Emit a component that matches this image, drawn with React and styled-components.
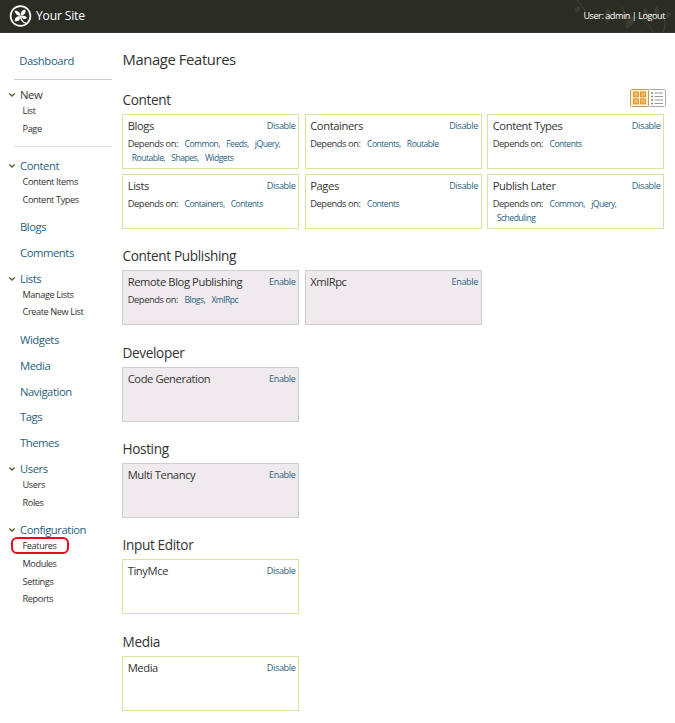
import React from "react";
import styled, { createGlobalStyle } from "styled-components";

const GlobalStyle = createGlobalStyle`
  *, *::after { box-sizing: border-box; }
  body {
    margin: 0;
    background: #fff;
    color: #333;
    font-family: "Open Sans", "Noto Sans", sans-serif;
  }
  a { color: inherit; text-decoration: none; }
  h1, h2, h3, ul { margin: 0; padding: 0; font-weight: 400; list-style: none; }
`;

const Page = styled.div`
  height: 723px;
  overflow: hidden;
`;

const Header = styled.header`
  position: relative;
  display: flex;
  align-items: center;
  height: 33px;
  padding: 0 10px 1px 9px;
  background: #2b2d25;
  border-bottom: 1px solid #383930;
  color: #fff;
`;

const Vine = styled.svg`
  position: absolute;
  right: 0;
  top: 0;
`;

const SiteName = styled.a`
  flex: 1;
  margin-left: 4px;
  font-size: 12.1px;
  letter-spacing: -0.17px;
  line-height: 19px;
  padding-bottom: 1px;
`;

const UserBar = styled.div`
  position: relative;
  font-size: 9.1px;
  letter-spacing: -0.45px;
  line-height: 16px;
  white-space: nowrap;
`;

const Body = styled.div`
  display: flex;
  align-items: flex-start;
`;

const Sidebar = styled.nav`
  width: 122px;
  padding: 18px 10px 0 8px;
`;

const Rule = styled.div`
  height: 1px;
  margin: 0 0 ${(p) => p.$space}px 6px;
  background: ${(p) => (p.$light ? "#e0e0e0" : "#cfcfcf")};
`;

const Dashboard = styled.a`
  display: block;
  height: 20px;
  margin: 0 0 8px 11.2px;
  color: #2a5f80;
  font-size: 11.3px;
  letter-spacing: -0.4px;
  line-height: 20px;
`;

const NavGroup = styled.section`
  margin-bottom: ${(p) => p.$gap}px;
`;

const NavHead = styled.h3`
  display: flex;
  align-items: center;
  height: 20px;
  color: ${(p) => (p.$plain ? "#333" : "#2a5f80")};
  font-size: 11.3px;
  letter-spacing: -0.46px;
  line-height: 20px;
  white-space: nowrap;
`;

const ArrowSlot = styled.span`
  display: flex;
  align-items: center;
  width: 12px;
`;

const SubList = styled.ul`
  margin: -2.9px 0 0 14.5px;
`;

const SubItem = styled.li`
  height: 17.6px;
  font-size: 9.2px;
  letter-spacing: -0.4px;
  line-height: 17.6px;
  white-space: nowrap;
`;

const Highlight = styled.span`
  position: relative;
  &::after {
    content: "";
    position: absolute;
    left: -12px;
    top: -2px;
    width: 58px;
    height: 17px;
    border: 2px solid #e60b1c;
    border-radius: 6px;
  }
`;

const Main = styled.main`
  width: 543px;
  padding-top: 15px;
`;

const Title = styled.h1`
  height: 23px;
  margin-bottom: 1.7px;
  padding-left: 0.5px;
  font-size: 14.8px;
  letter-spacing: -0.38px;
  line-height: 23px;
`;

const TitleRow = styled.div`
  display: flex;
  align-items: flex-end;
  justify-content: space-between;
  height: 41.35px;
`;

const SectionTitle = styled.h2`
  height: 24px;
  padding-left: 0.5px;
  font-size: 13.6px;
  letter-spacing: -0.35px;
  line-height: 20px;
`;

const Switcher = styled.svg`
  margin: 0 -1px 7px 0;
`;

const Cards = styled.div`
  display: grid;
  grid-template-columns: repeat(3, 177px);
  gap: 5px 5.5px;
`;

const Card = styled.article`
  height: 55px;
  padding: 2px 2.5px 0 4.7px;
  border: 1px solid ${(p) => (p.$off ? "#cecece" : "#d3e69f")};
  background: ${(p) => (p.$off ? "#efeaee" : "#fff")};
`;

const CardTop = styled.div`
  display: flex;
  justify-content: space-between;
  height: 19px;
`;

const CardTitle = styled.h3`
  font-size: 11.2px;
  letter-spacing: -0.4px;
  line-height: 17.6px;
`;

const Action = styled.a`
  color: #2a5f80;
  font-size: 9.1px;
  letter-spacing: -0.36px;
  line-height: 18px;
`;

const Depends = styled.div`
  display: flex;
  flex-wrap: wrap;
  max-width: 160px;
  padding-top: 1px;
  line-height: 14px;
`;

const DependsLabel = styled.span`
  margin-right: 2.3px;
  font-size: 9.3px;
  letter-spacing: -0.4px;
`;

const Dependency = styled.a`
  margin: 0 2px 0 4.1px;
  color: #2a5f80;
  font-size: 8.6px;
  letter-spacing: -0.52px;
`;

const Logo = () => (
  <svg width="23" height="24" viewBox="0 0 23 24" fill="none">
    <circle cx="11.5" cy="12" r="9.9" stroke="#fff" strokeWidth="1.7" />
    <g fill="#fff">
      <path d="M11.4 12C8.5 11.6 5.9 9.8 5.6 6.7C9 6.2 11.4 8.5 11.4 12Z" />
      <path d="M11.8 11.7C11.2 8.5 13.1 5.7 16.4 5.8C17.2 9 15 11.6 11.8 11.7Z" />
      <path d="M11.2 12.4C11.5 15.7 9.1 17.9 5.9 17.2C5.3 14.2 7.8 12 11.2 12.4Z" />
      <path d="M11.9 12.2C14.2 11.3 17.2 11.9 17.9 14.2C15.7 15.8 13 15 11.9 12.2Z" />
    </g>
    <path d="M11.5 12C11.7 15.4 13.2 18.1 17.2 19.3" stroke="#fff" strokeWidth="1.3" />
  </svg>
);

const VineArt = () => (
  <Vine width="110" height="32" viewBox="0 0 110 32" fill="none">
    <g stroke="#414439" strokeWidth="1">
      <path d="M12 0C16 3 17 8 21 12" />
      <path d="M60 20C68 15 75 17 80 22C85 26 87 29 88 32" />
      <path d="M98 32C101 26 100 20 98 15M66 18C60 14 58 11 57 7" />
    </g>
    <g fill="#3a3d32">
      <path d="M15 6C10 6 9 10 11 13C15 12 16 9 15 6Z" />
      <path d="M43 8C48 13 46 18 42 24C39 18 39 13 43 8Z" />
      <path d="M68 18C71 21 68 26 61 29C59 23 62 19 68 18Z" />
      <path d="M80 8C85 10 84 15 82 20C78 16 77 11 80 8Z" />
      <path d="M91 6C95 9 95 14 92 17C89 13 89 9 91 6Z" />
      <path d="M105 12C108 14 105 18 101 18C100 15 102 12 105 12Z" />
    </g>
  </Vine>
);

const Arrow = () => (
  <svg width="8" height="6" viewBox="0 0 8 6" fill="none">
    <path d="M1.3 1.6L4 4L6.7 1.6" stroke="#4e6426" strokeWidth="1.4" />
  </svg>
);

const ViewSwitcher = () => (
  <Switcher width="36" height="18" viewBox="0 0 36 18">
    <rect x="18.5" y=".5" width="17" height="17" rx="1" fill="#fff" stroke="#aaa" />
    <rect x=".5" y=".5" width="18" height="17" rx="1" fill="#fff2d6" stroke="#c89a50" />
    <g fill="#fbb44c" stroke="#d08c2e" strokeWidth=".8">
      <rect x="3.4" y="2.9" width="5" height="5" />
      <rect x="10.4" y="2.9" width="5" height="5" />
      <rect x="3.4" y="9.9" width="5" height="5" />
      <rect x="10.4" y="9.9" width="5" height="5" />
    </g>
    <path d="M21 4h2M21 7.5h2M21 11h2M21 14.5h2" stroke="#888" strokeWidth="1.6" />
    <path d="M24.5 4H33M24.5 7.5H33M24.5 11H33M24.5 14.5H33" stroke="#999" strokeWidth="1" />
  </Switcher>
);

const menu = [
  { title: "Content", items: ["Content Items", "Content Types"] },
  { title: "Blogs" },
  { title: "Comments" },
  { title: "Lists", items: ["Manage Lists", "Create New List"] },
  { title: "Widgets" },
  { title: "Media" },
  { title: "Navigation" },
  { title: "Tags" },
  { title: "Themes" },
  { title: "Users", items: ["Users", "Roles"] },
  { title: "Configuration", items: ["Features", "Modules", "Settings", "Reports"] },
];

const sections = [
  {
    title: "Content",
    features: [
      { name: "Blogs", on: true, deps: ["Common", "Feeds", "jQuery", "Routable", "Shapes", "Widgets"] },
      { name: "Containers", on: true, deps: ["Contents", "Routable"] },
      { name: "Content Types", on: true, deps: ["Contents"] },
      { name: "Lists", on: true, deps: ["Containers", "Contents"] },
      { name: "Pages", on: true, deps: ["Contents"] },
      { name: "Publish Later", on: true, deps: ["Common", "jQuery", "Scheduling"] },
    ],
  },
  {
    title: "Content Publishing",
    features: [{ name: "Remote Blog Publishing", deps: ["Blogs", "XmlRpc"] }, { name: "XmlRpc" }],
  },
  { title: "Developer", features: [{ name: "Code Generation" }] },
  { title: "Hosting", features: [{ name: "Multi Tenancy" }] },
  { title: "Input Editor", features: [{ name: "TinyMce", on: true }] },
  { title: "Media", features: [{ name: "Media", on: true }] },
];

function NavSection({ title, items, plain }) {
  return (
    <NavGroup $gap={plain ? 8.4 : items ? 8.9 : 5.85}>
      <NavHead $plain={plain}>
        <ArrowSlot>{items && <Arrow />}</ArrowSlot>
        <a href="#">{title}</a>
      </NavHead>
      {items && (
        <SubList>
          {items.map((item) => (
            <SubItem key={item}>
              {item === "Features" ? <Highlight>{item}</Highlight> : item}
            </SubItem>
          ))}
        </SubList>
      )}
    </NavGroup>
  );
}

function Feature({ name, on, deps }) {
  return (
    <Card $off={!on}>
      <CardTop>
        <CardTitle>{name}</CardTitle>
        <Action href="#">{on ? "Disable" : "Enable"}</Action>
      </CardTop>
      {deps && (
        <Depends>
          <DependsLabel>Depends on:</DependsLabel>
          {deps.map((dep, i) => (
            <Dependency href="#" key={dep}>
              {dep}
              {i < deps.length - 1 && ","}
            </Dependency>
          ))}
        </Depends>
      )}
    </Card>
  );
}

export default function App() {
  return (
    <Page>
      <GlobalStyle />
      <Header>
        <VineArt />
        <Logo />
        <SiteName href="#">Your Site</SiteName>
        <UserBar>User: admin | Logout</UserBar>
      </Header>
      <Body>
        <Sidebar>
          <Dashboard href="#">Dashboard</Dashboard>
          <Rule $space={5.2} />
          <NavSection plain title="New" items={["List", "Page"]} />
          <Rule $light $space={9} />
          {menu.map((entry) => (
            <NavSection key={entry.title} {...entry} />
          ))}
        </Sidebar>
        <Main>
          <Title>Manage Features</Title>
          {sections.map((section, i) => (
            <section key={section.title}>
              <TitleRow>
                <SectionTitle>{section.title}</SectionTitle>
                {i === 0 && <ViewSwitcher />}
              </TitleRow>
              <Cards>
                {section.features.map((feature) => (
                  <Feature key={feature.name} {...feature} />
                ))}
              </Cards>
            </section>
          ))}
        </Main>
      </Body>
    </Page>
  );
}
